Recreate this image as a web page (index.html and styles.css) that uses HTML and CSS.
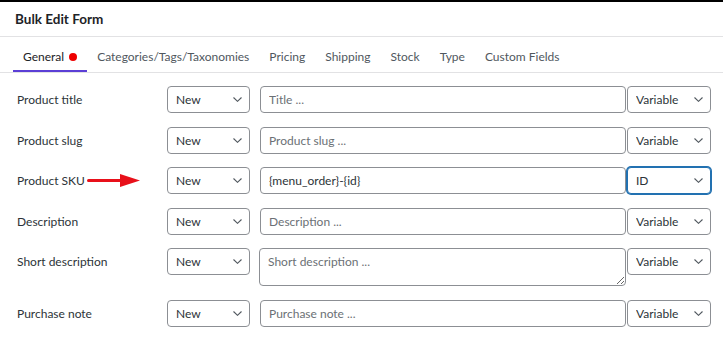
FILE: index.html
```html
<!DOCTYPE html>
<html lang="en">
<head>
    <meta charset="UTF-8">
    <meta name="viewport" content="width=device-width, initial-scale=1.0">
    <title>Bulk Edit Form</title>
    <link rel="stylesheet" href="styles.css">
</head>
<body>
    <div class="panel">
        <header class="panel-head">
            <h1 class="panel-title">Bulk Edit Form</h1>
        </header>

        <!-- Pestañas -->
        <nav class="tabs">
            <a class="tab active" href="#">General <span class="dot"></span></a>
            <a class="tab" href="#">Categories/Tags/Taxonomies</a>
            <a class="tab" href="#">Pricing</a>
            <a class="tab" href="#">Shipping</a>
            <a class="tab" href="#">Stock</a>
            <a class="tab" href="#">Type</a>
            <a class="tab" href="#">Custom Fields</a>
        </nav>

        <form class="form">
            <div class="row">
                <label class="label">Product title</label>
                <span class="pick mode">
                    <select><option>New</option></select>
                    <svg width="9" height="5" viewBox="0 0 9 5"><path d="M0.5 0.5 L4.5 4.3 L8.5 0.5" fill="none" stroke="#50575e" stroke-width="1.1"/></svg>
                </span>
                <input class="field" type="text" placeholder="Title ...">
                <span class="pick var">
                    <select><option>Variable</option></select>
                    <svg width="9" height="5" viewBox="0 0 9 5"><path d="M0.5 0.5 L4.5 4.3 L8.5 0.5" fill="none" stroke="#50575e" stroke-width="1.1"/></svg>
                </span>
            </div>

            <div class="row">
                <label class="label">Product slug</label>
                <span class="pick mode">
                    <select><option>New</option></select>
                    <svg width="9" height="5" viewBox="0 0 9 5"><path d="M0.5 0.5 L4.5 4.3 L8.5 0.5" fill="none" stroke="#50575e" stroke-width="1.1"/></svg>
                </span>
                <input class="field" type="text" placeholder="Product slug ...">
                <span class="pick var">
                    <select><option>Variable</option></select>
                    <svg width="9" height="5" viewBox="0 0 9 5"><path d="M0.5 0.5 L4.5 4.3 L8.5 0.5" fill="none" stroke="#50575e" stroke-width="1.1"/></svg>
                </span>
            </div>

            <div class="row">
                <label class="label">Product SKU
                    <svg class="arrow" width="54" height="13" viewBox="0 0 54 13">
                        <path d="M1.5 5 H34 V8 H1.5 A1.5 1.5 0 0 1 1.5 5 Z" fill="#e8101a"/>
                        <polygon points="33,0 53,6.5 33,13" fill="#e8101a"/>
                    </svg>
                </label>
                <span class="pick mode">
                    <select><option>New</option></select>
                    <svg width="9" height="5" viewBox="0 0 9 5"><path d="M0.5 0.5 L4.5 4.3 L8.5 0.5" fill="none" stroke="#50575e" stroke-width="1.1"/></svg>
                </span>
                <input class="field filled" type="text" value="{menu_order}-{id}">
                <span class="pick var focus">
                    <select><option>ID</option></select>
                    <svg width="9" height="5" viewBox="0 0 9 5"><path d="M0.5 0.5 L4.5 4.3 L8.5 0.5" fill="none" stroke="#50575e" stroke-width="1.1"/></svg>
                </span>
            </div>

            <div class="row">
                <label class="label">Description</label>
                <span class="pick mode">
                    <select><option>New</option></select>
                    <svg width="9" height="5" viewBox="0 0 9 5"><path d="M0.5 0.5 L4.5 4.3 L8.5 0.5" fill="none" stroke="#50575e" stroke-width="1.1"/></svg>
                </span>
                <input class="field" type="text" placeholder="Description ...">
                <span class="pick var">
                    <select><option>Variable</option></select>
                    <svg width="9" height="5" viewBox="0 0 9 5"><path d="M0.5 0.5 L4.5 4.3 L8.5 0.5" fill="none" stroke="#50575e" stroke-width="1.1"/></svg>
                </span>
            </div>

            <div class="row">
                <label class="label">Short description</label>
                <span class="pick mode">
                    <select><option>New</option></select>
                    <svg width="9" height="5" viewBox="0 0 9 5"><path d="M0.5 0.5 L4.5 4.3 L8.5 0.5" fill="none" stroke="#50575e" stroke-width="1.1"/></svg>
                </span>
                <textarea class="field area" placeholder="Short description ..."></textarea>
                <span class="pick var">
                    <select><option>Variable</option></select>
                    <svg width="9" height="5" viewBox="0 0 9 5"><path d="M0.5 0.5 L4.5 4.3 L8.5 0.5" fill="none" stroke="#50575e" stroke-width="1.1"/></svg>
                </span>
            </div>

            <div class="row">
                <label class="label">Purchase note</label>
                <span class="pick mode">
                    <select><option>New</option></select>
                    <svg width="9" height="5" viewBox="0 0 9 5"><path d="M0.5 0.5 L4.5 4.3 L8.5 0.5" fill="none" stroke="#50575e" stroke-width="1.1"/></svg>
                </span>
                <input class="field" type="text" placeholder="Purchase note ...">
                <span class="pick var">
                    <select><option>Variable</option></select>
                    <svg width="9" height="5" viewBox="0 0 9 5"><path d="M0.5 0.5 L4.5 4.3 L8.5 0.5" fill="none" stroke="#50575e" stroke-width="1.1"/></svg>
                </span>
            </div>
        </form>
    </div>
</body>
</html>
```

FILE: styles.css
```css
* {
    box-sizing: border-box;
}

body {
    margin: 0;
    font-family: 'Lato', 'Noto Sans', sans-serif;
    color: #2c3338;
    background-color: #fff;
    border-top: 2px solid #000;
    overflow: hidden;
}

/* Cabecera */
.panel-head {
    height: 35px;
    padding: 0 15px;
    display: flex;
    align-items: center;
    border-bottom: 1px solid #e2e2e4;
}

.panel-title {
    margin: 0;
    font-size: 13.5px;
    font-weight: 700;
    color: #1d2327;
}

/* Pestañas */
.tabs {
    display: flex;
    padding-left: 13px;
    border-bottom: 1px solid #e2e2e4;
}

.tab {
    display: flex;
    align-items: center;
    gap: 5px;
    padding: 12px 10px 5px;
    line-height: 16px;
    font-size: 12px;
    color: #50575e;
    text-decoration: none;
    border-bottom: 2px solid transparent;
}

.tab.active {
    color: #1d2327;
    border-bottom-color: #5b3fd6;
}

.dot {
    width: 8px;
    height: 8px;
    border-radius: 50%;
    background-color: #ee0000;
}

/* Formulario */
.form {
    display: flex;
    flex-direction: column;
    gap: 13.5px;
    padding: 13px 12px 0 17px;
    margin: 0;
}

.row {
    display: flex;
    align-items: flex-start;
}

.label {
    flex: none;
    width: 150px;
    height: 27px;
    display: flex;
    align-items: center;
    font-size: 12px;
    color: #2c3338;
}

.arrow {
    margin-left: 2px;
}

.pick {
    position: relative;
    flex: none;
    display: block;
}

.pick select {
    appearance: none;
    -webkit-appearance: none;
    width: 100%;
    height: 27px;
    margin: 0;
    padding: 0 24px 0 8px;
    border: 1px solid #8c8f94;
    border-radius: 4px;
    background-color: #fff;
    font-family: inherit;
    font-size: 12px;
    color: #2c3338;
}

.pick svg {
    position: absolute;
    right: 8px;
    top: 11px;
    pointer-events: none;
}

.mode {
    width: 83px;
    margin-right: 10px;
}

.var {
    width: 84px;
}

.var.focus select {
    border-color: #2271b1;
    box-shadow: 0 0 0 1px #2271b1;
}

.field {
    flex: 1;
    min-width: 0;
    height: 27px;
    margin: 0 1px 0 0;
    padding: 0 8px;
    border: 1px solid #8c8f94;
    border-radius: 4px;
    font-family: inherit;
    font-size: 12px;
    color: #2c3338;
    background-color: #fff;
}

.field::placeholder {
    color: #6b7075;
}

.area {
    height: 38px;
    margin-left: -1px;
    padding: 5px 8px;
    line-height: 16px;
    resize: both;
}
```
